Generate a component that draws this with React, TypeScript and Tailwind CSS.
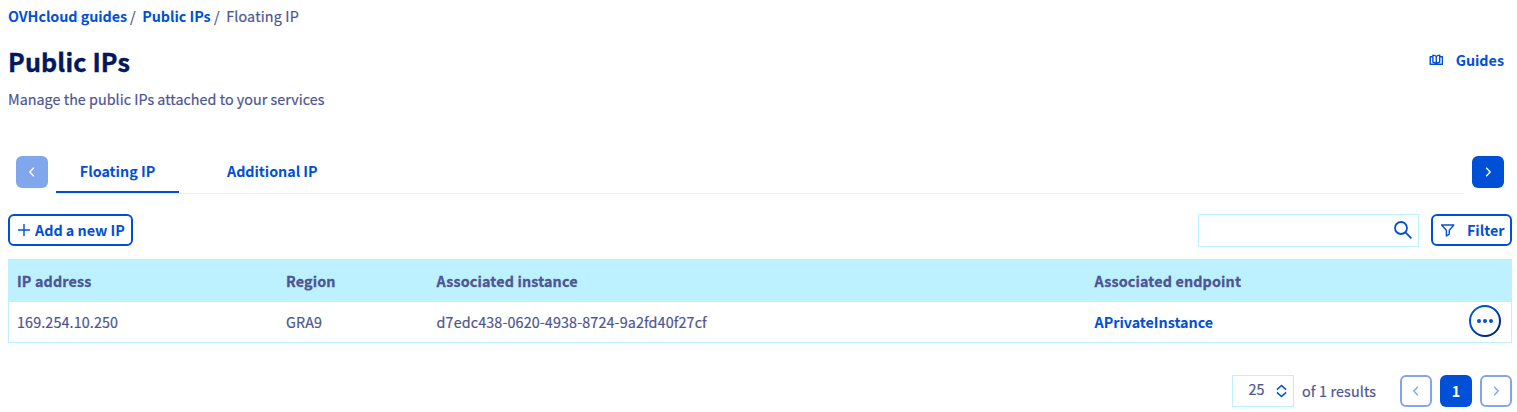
import React from "react";

const columns = "grid grid-cols-[269px_150.6px_658px_1fr]";

function Chevron({ dir, width = 1.4 }: { dir: "left" | "right"; width?: number }) {
  return (
    <svg width="16" height="16" viewBox="0 0 16 16" fill="none" stroke="currentColor" strokeWidth={width}>
      <path d={dir === "left" ? "M9.8 3.8 5.8 8l4 4.2" : "M6.2 3.8l4 4.2-4 4.2"} />
    </svg>
  );
}

function GuidesIcon() {
  return (
    <svg width="14" height="12" viewBox="0 0 14 12" fill="none" stroke="currentColor" strokeWidth="1.4" strokeLinejoin="round">
      <path d="M3.6 2.8H1.2v7.4h12.2V2.8h-2.6" />
      <path d="M7.3 9.6V2.6Q6.1 1.2 3.9 1.1V8.3Q6.1 8.4 7.3 10 8.5 8.4 10.7 8.3V1.1Q8.5 1.2 7.3 2.6" />
    </svg>
  );
}

function PlusIcon() {
  return (
    <svg width="12" height="12" viewBox="0 0 12 12" fill="none" stroke="currentColor" strokeWidth="1.4">
      <path d="M6 0v12M0 6h12" />
    </svg>
  );
}

function SearchIcon() {
  return (
    <svg width="18" height="18" viewBox="0 0 18 18" fill="none" stroke="currentColor" strokeWidth="1.8">
      <circle cx="7" cy="7" r="6" />
      <path d="m11.2 11.2 6.2 6.2" />
    </svg>
  );
}

function FilterIcon() {
  return (
    <svg width="14" height="13" viewBox="0 0 14 13" fill="none" stroke="currentColor" strokeWidth="1.4" strokeLinejoin="round">
      <path d="M.6 1h12.2L8.3 6.3v3.8L5.4 12V6.3z" />
    </svg>
  );
}

function SortIcon() {
  return (
    <svg width="12" height="14" viewBox="0 0 12 14" fill="none" stroke="currentColor" strokeWidth="1.5">
      <path d="M1.9 5.6 6.5 1.4l4.6 4.2M1.9 8.4l4.6 4.2 4.6-4.2" />
    </svg>
  );
}

function MoreIcon() {
  return (
    <svg width="32" height="32" viewBox="0 0 32 32">
      <defs>
        <linearGradient id="ring" x1="0" y1="0" x2="1" y2="1">
          <stop offset=".3" stopColor="#0050d7" />
          <stop offset=".8" stopColor="#00257a" />
        </linearGradient>
      </defs>
      <circle cx="16" cy="16" r="15" fill="none" stroke="url(#ring)" strokeWidth="2" />
      <g fill="#0050d7">
        <circle cx="10" cy="16" r="2" />
        <circle cx="16" cy="16" r="2" />
        <circle cx="22" cy="16" r="2" />
      </g>
    </svg>
  );
}

export default function App() {
  return (
    <main className="h-[412px] overflow-hidden bg-white pr-[5px] pl-2 font-['Noto_Sans_CJK_SC',sans-serif] text-[14.32px] leading-6 text-[#4d5592]">
      <nav className="flex h-[33px] items-start pt-1 whitespace-pre">
        <a className="font-bold tracking-[-0.05px] text-[#0050d7]">OVHcloud guides</a>
        <span className="ml-[3px] [-webkit-text-stroke:0.2px]">/</span>
        <a className="ml-[6.5px] font-bold tracking-[-0.03px] text-[#0050d7]">Public IPs</a>
        <span className="ml-[3.5px] [-webkit-text-stroke:0.2px]">/</span>
        <span className="ml-[6.5px] tracking-[0.17px] [-webkit-text-stroke:0.2px]">Floating IP</span>
      </nav>

      <header className="flex h-[123px] justify-between">
        <div>
          <h1 className="mt-3 text-[25.1px] leading-8 font-bold tracking-[0.15px] text-[#00185e] [-webkit-text-stroke:0.4px]">Public IPs</h1>
          <p className="mt-[10px] tracking-[0.035px] [-webkit-text-stroke:0.2px]">Manage the public IPs attached to your services</p>
        </div>
        <a className="mt-[15px] mr-2 flex h-6 items-center gap-[13px] font-bold text-[#0050d7]">
          <GuidesIcon />
          Guides
        </a>
      </header>

      <div className="flex h-[38px] items-start px-2">
        <button className="flex size-8 items-center justify-center rounded-[6px] bg-[#80a7eb] text-white">
          <Chevron dir="left" />
        </button>
        <div className="mx-2 flex h-[38px] flex-1 border-b border-[#def5fd] font-bold text-[#0050d7]">
          <button className="flex h-[37px] w-[123px] justify-center border-b-2 border-[#0050d7] pt-[3px]">Floating IP</button>
          <button className="ml-6 flex h-[37px] px-6 pt-[3px] tracking-[-0.03px]">Additional IP</button>
        </div>
        <button className="flex size-8 items-center justify-center rounded-[6px] bg-[#0050d7] text-white">
          <Chevron dir="right" />
        </button>
      </div>

      <div className="mt-5 flex h-[33px] items-start font-bold text-[#0050d7]">
        <button className="flex h-8 w-[125px] items-center gap-[5px] rounded-[6px] border-2 border-[#0050d7] pl-2 whitespace-nowrap">
          <PlusIcon />
          Add a new IP
        </button>
        <div className="ml-auto flex h-[33px] w-[221px] items-start justify-end border border-[#bef1ff] pt-[6px] pr-[6px]">
          <SearchIcon />
        </div>
        <button className="ml-3 flex h-8 w-[81px] items-center gap-3 rounded-[6px] border-2 border-[#0050d7] pl-2">
          <FilterIcon />
          Filter
        </button>
      </div>

      <section className="mt-3 h-[84px] border border-[#bef1ff]">
        <div className={`${columns} h-[42px] items-center bg-[#bef1ff] pl-2 font-bold tracking-[0.15px] [-webkit-text-stroke:0.3px]`}>
          <span>IP address</span>
          <span>Region</span>
          <span>Associated instance</span>
          <span>Associated endpoint</span>
        </div>
        <div className={`${columns} h-10 items-center pl-2 tracking-[0.13px] [-webkit-text-stroke:0.2px]`}>
          <span>169.254.10.250</span>
          <span>GRA9</span>
          <span>d7edc438-0620-4938-8724-9a2fd40f27cf</span>
          <div className="flex items-center justify-between pr-[10px]">
            <a className="font-bold tracking-[-0.03px] text-[#0050d7] [-webkit-text-stroke:0]">APrivateInstance</a>
            <button className="-mt-[3px]"><MoreIcon /></button>
          </div>
        </div>
      </section>

      <footer className="mt-8 flex h-8 items-center justify-end">
        <div className="flex h-8 w-[62px] items-center justify-between border border-[#bef1ff] pr-[6px] pl-[15.5px]">
          <span className="-mt-1 tracking-[0.15px] [-webkit-text-stroke:0.2px]">25</span>
          <span className="text-[#0050d7]"><SortIcon /></span>
        </div>
        <span className="ml-2 w-[74px] tracking-[0.15px] whitespace-nowrap [-webkit-text-stroke:0.2px]">of 1 results</span>
        <div className="ml-6 flex gap-2">
          <button className="flex size-8 items-center justify-center rounded-[6px] border-2 border-[#80a7eb] text-[#80a7eb]"><Chevron dir="left" /></button>
          <button className="flex size-8 items-center justify-center rounded-[6px] bg-[#0050d7] font-bold text-white">1</button>
          <button className="flex size-8 items-center justify-center rounded-[6px] border-2 border-[#80a7eb] text-[#80a7eb]"><Chevron dir="right" /></button>
        </div>
      </footer>
    </main>
  );
}
